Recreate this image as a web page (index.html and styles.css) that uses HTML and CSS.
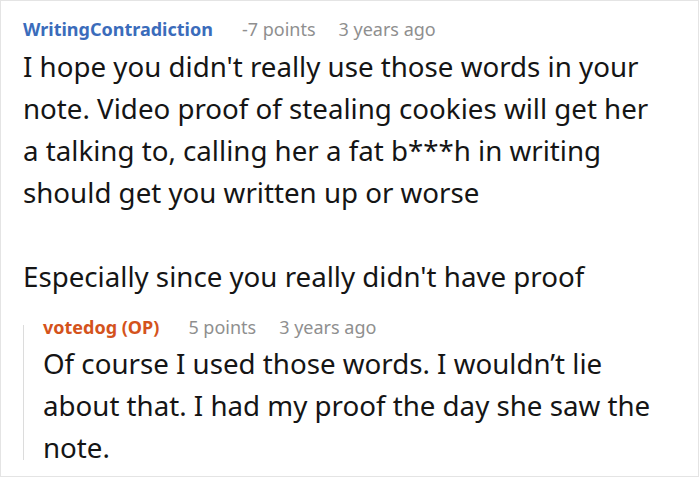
FILE: index.html
```html
<!DOCTYPE html>
<html>
<head>
<meta charset="utf-8">
<link rel="stylesheet" href="styles.css">
</head>
<body>
<div class="thread">
  <div class="comment">
    <div class="meta">
      <span class="author">WritingContradiction</span>
      <span class="points">-7 points</span>
      <span class="age">3 years ago</span>
    </div>
    <div class="text">
      <p>I hope you didn't really use those words in your note. Video proof of stealing cookies will get her a talking to, calling her a fat b***h in writing should get you written up or worse</p>
      <p>Especially since you really didn't have proof</p>
    </div>
  </div>
  <div class="reply">
    <div class="meta">
      <span class="author op">votedog (OP)</span>
      <span class="points">5 points</span>
      <span class="age">3 years ago</span>
    </div>
    <div class="text reply-text">
      <p>Of course I used those words. I wouldn’t lie about that. I had my proof the day she saw the note.</p>
    </div>
  </div>
</div>
</body>
</html>
```

FILE: styles.css
```css
html, body {
  margin: 0;
  padding: 0;
  background: #fff;
}
body {
  font-family: "Noto Sans", "Open Sans", sans-serif;
  color: #111;
}
.thread {
  box-sizing: border-box;
  width: 699px;
  height: 477px;
  border: 1px solid #e4e4e4;
  padding: 16px 40px 0 22px;
  overflow: hidden;
}
.meta {
  display: flex;
  align-items: baseline;
  font-size: 18px;
  line-height: 24px;
  color: #8f8f8f;
}
.author {
  font-weight: 700;
  color: #3b6cbb;
  margin-right: 29px;
}
.author.op {
  color: #d4531c;
}
.points {
  margin-right: 23px;
}
.text {
  font-size: 27.7px;
  line-height: 42px;
  color: #151515;
  margin-top: 4px;
}
.text p {
  margin: 0 0 42px 0;
}
.text p:last-child {
  margin-bottom: 0;
}
.reply {
  position: relative;
  margin-top: 18px;
  padding-left: 20px;
}
.reply::before {
  content: "";
  position: absolute;
  left: 0;
  top: 10px;
  height: 135px;
  border-left: 1px solid #dcdcdc;
}
.reply-text {
  margin-top: 3px;
}
```
